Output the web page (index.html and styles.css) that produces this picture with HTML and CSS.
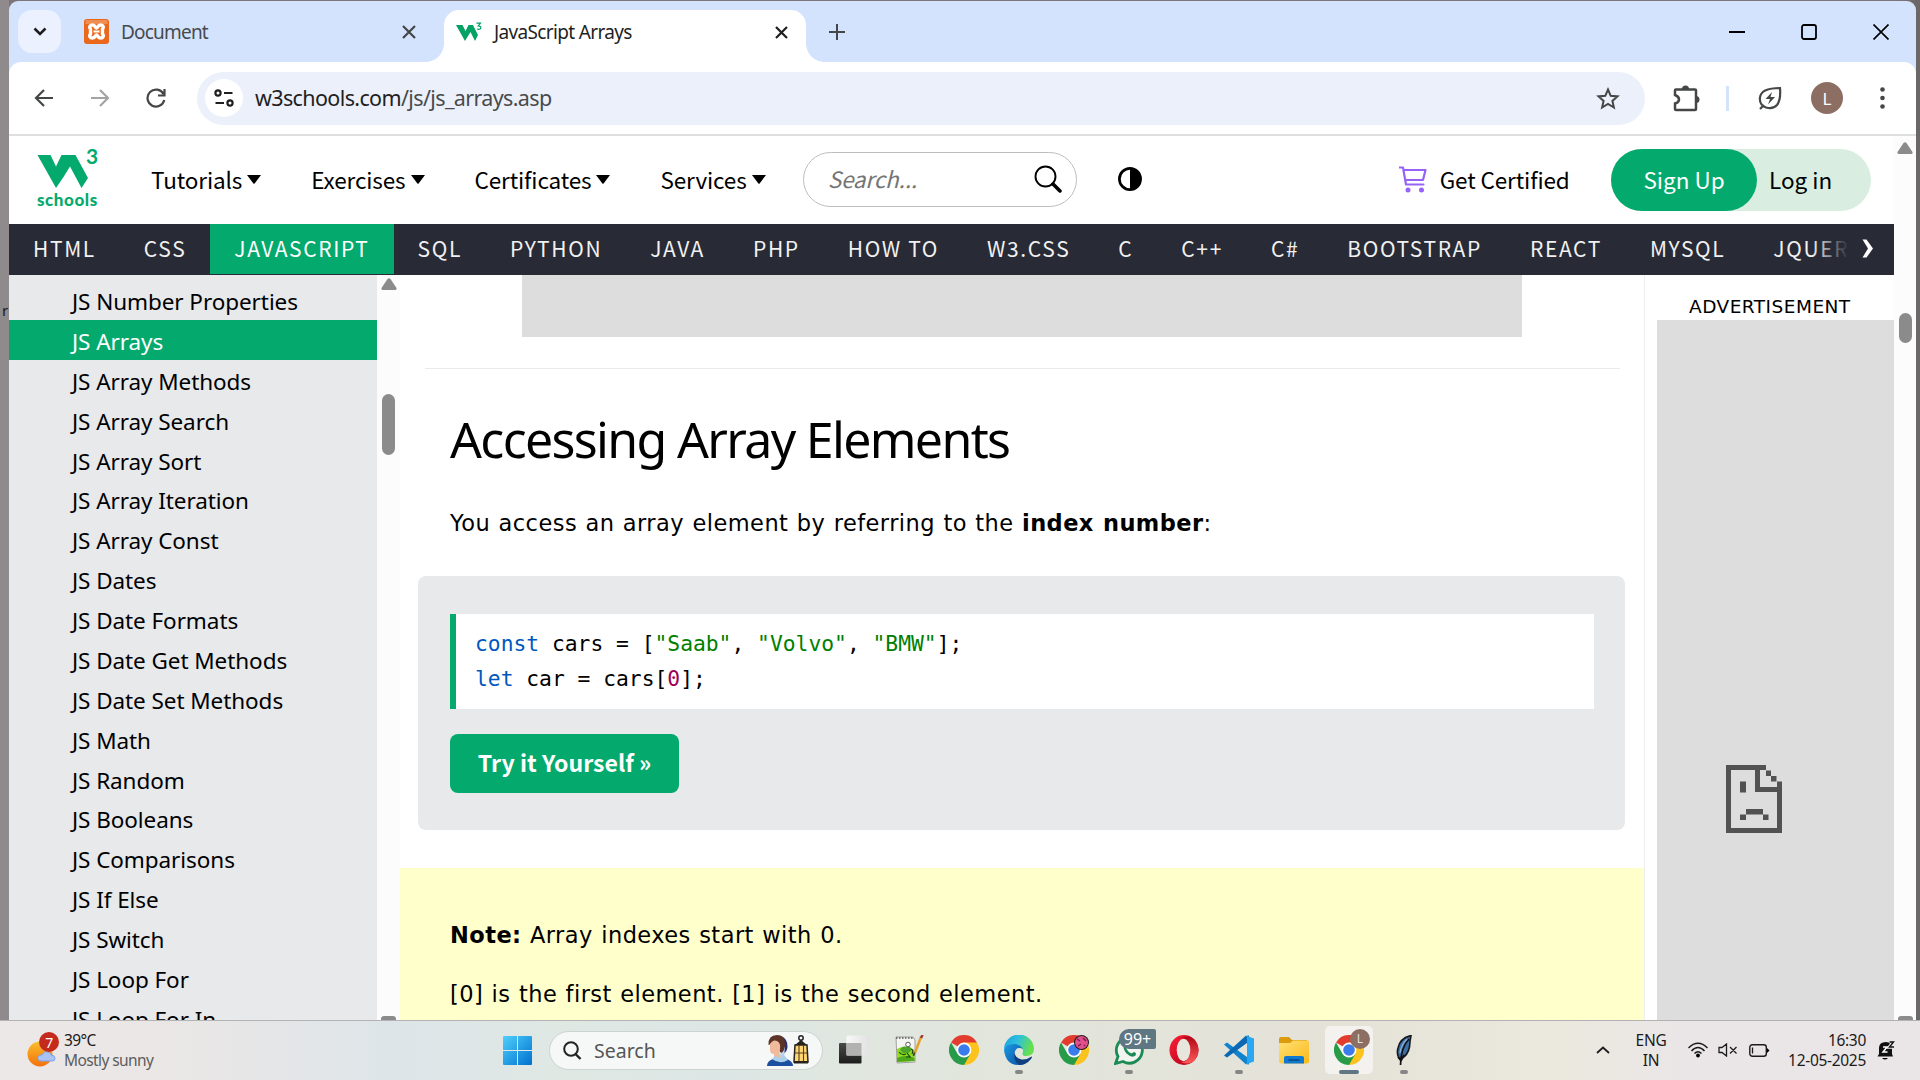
FILE: index.html
```html
<!DOCTYPE html>
<html lang="en">
<head>
<meta charset="utf-8">
<title>JavaScript Arrays</title>
<link rel="stylesheet" href="styles.css">
</head>
<body>
<svg class="defs" width="0" height="0">
  <defs>
    <linearGradient id="gWin" x1="0" y1="0" x2="1" y2="1"><stop offset="0" stop-color="#4fd0fb"/><stop offset="1" stop-color="#0070d0"/></linearGradient>
    <linearGradient id="gSun" x1="0" y1="0" x2="0" y2="1"><stop offset="0" stop-color="#f9bf2c"/><stop offset="1" stop-color="#f4700d"/></linearGradient>
    <linearGradient id="gDark" x1="0" y1="0" x2="0" y2="1"><stop offset="0" stop-color="#4a4a48"/><stop offset="1" stop-color="#1c1c1c"/></linearGradient>
    <linearGradient id="gLight" x1="0" y1="0" x2="1" y2="0"><stop offset="0" stop-color="#f8f8f8"/><stop offset="1" stop-color="#e2e2e2"/></linearGradient>
    <linearGradient id="gEdge" x1="0" y1="0" x2="1" y2="0.3"><stop offset="0" stop-color="#1c9de0"/><stop offset="0.5" stop-color="#2fc0dc"/><stop offset="1" stop-color="#66e04c"/></linearGradient>
    <linearGradient id="gEdge2" x1="0" y1="0" x2="1" y2="1"><stop offset="0" stop-color="#1a9be4"/><stop offset="1" stop-color="#0c50a0"/></linearGradient>
    <linearGradient id="gOpera" x1="0" y1="0" x2="1" y2="1"><stop offset="0" stop-color="#ff2038"/><stop offset="1" stop-color="#a80014"/></linearGradient>
    <linearGradient id="gOpera2" x1="0" y1="0" x2="0" y2="1"><stop offset="0" stop-color="#b00516"/><stop offset="1" stop-color="#ff5a5a"/></linearGradient>
    <linearGradient id="gFolder" x1="0" y1="0" x2="1" y2="1"><stop offset="0" stop-color="#ffe177"/><stop offset="1" stop-color="#fbb917"/></linearGradient>
    <symbol id="chrome" viewBox="0 0 30 30">
      <path d="M15 15L2 7.5A15 15 0 0 1 28 7.5Z" fill="#e33b2e"/>
      <path d="M15 15V7.5H28A15 15 0 0 1 15 30Z" fill="#fcc31e"/>
      <path d="M2 7.5A15 15 0 0 0 15 30L21.500 18.700L15 22L8.500 18.700Z" fill="#289b48"/>
      <circle cx="15" cy="15" r="7.400" fill="#fff"/><circle cx="15" cy="15" r="5.800" fill="#3b7cec"/>
    </symbol>
    <symbol id="caret" viewBox="0 0 14 9"><path d="M0 0H14L7.600 8.400Q7 9 6.400 8.400Z"/></symbol>
    <symbol id="w3" viewBox="0 0 50 33"><path d="M0 0H13L18.500 11.500L24 0H38L50.500 23L44 33L32.500 11.500L26 22L18.500 33Z"/></symbol>
  </defs>
</svg>

<div class="desktop">
  <span class="behind">r</span>
  <div class="window">
    <div class="tabstrip">
      <button class="tab-search"><svg width="14" height="9" viewBox="0 0 14 9"><path d="M1.500 1.500L7 7L12.500 1.500" fill="none" stroke="#1f1f1f" stroke-width="2.600"/></svg></button>
      <div class="tab">
        <svg width="25" height="25" viewBox="0 0 25 25"><rect width="25" height="25" rx="3" fill="#e9681b"/><rect x="1.500" y="1" width="22" height="4" fill="#f08e51"/><path d="M8.500 6C5.500 6 5 8.500 6.500 10V15C5 16.500 5.500 19 8.500 19C11.500 19 11 16 12.500 16S13.500 19 16.500 19C19.500 19 20 16.500 18.500 15V10C20 8.500 19.500 6 16.500 6C13.500 6 14 9 12.500 9S11.500 6 8.500 6Z" fill="none" stroke="#fff" stroke-width="3.400"/><path d="M9.500 12.500H15.500" stroke="#fff" stroke-width="2"/></svg>
        <span class="tab-title">Document</span>
        <svg class="tab-close" width="14" height="14" viewBox="0 0 14 14"><path d="M1 1L13 13M13 1L1 13" stroke="#444746" stroke-width="2.200"/></svg>
      </div>
      <div class="tab active">
        <svg width="26" height="20" viewBox="0 0 26 20"><path d="M0 3H6.500L9.500 9L12.500 3H17L22 13L19 19L14.500 10L9 19Z" fill="#04a265"/><path d="M20.500 1.200H24.500L22.300 4Q25 4 24.800 6Q24.200 8 21 7" fill="none" stroke="#04a265" stroke-width="1.200"/></svg>
        <span class="tab-title">JavaScript Arrays</span>
        <svg class="tab-close" width="13" height="13" viewBox="0 0 13 13"><path d="M1 1L12 12M12 1L1 12" stroke="#1f1f1f" stroke-width="2.200"/></svg>
      </div>
      <svg class="new-tab" width="16" height="16" viewBox="0 0 16 16"><path d="M8 0V16M0 8H16" stroke="#444746" stroke-width="2"/></svg>
      <div class="controls">
        <svg width="16" height="16" viewBox="0 0 16 16"><path d="M0 8H16" stroke="#000" stroke-width="2"/></svg>
        <svg width="16" height="16" viewBox="0 0 16 16"><rect x="1" y="1" width="14" height="14" rx="2" fill="none" stroke="#000" stroke-width="1.800"/></svg>
        <svg width="16" height="16" viewBox="0 0 16 16"><path d="M0.500 0.500L15.500 15.500M15.500 0.500L0.500 15.500" stroke="#000" stroke-width="1.700"/></svg>
      </div>
    </div>

    <div class="toolbar">
      <div class="nav-buttons">
        <svg width="20" height="20" viewBox="0 0 20 20"><path d="M19 10H2M10 2L2 10L10 18" fill="none" stroke="#444746" stroke-width="2.200"/></svg>
        <svg width="20" height="20" viewBox="0 0 20 20"><path d="M1 10H18M10 2L18 10L10 18" fill="none" stroke="#a3a5a5" stroke-width="2.200"/></svg>
        <svg width="20" height="20" viewBox="0 0 20 20"><path d="M17.500 6A8.500 8.500 0 1 0 18.300 12M18.500 1V7.500H12" fill="none" stroke="#444746" stroke-width="2.200"/></svg>
      </div>
      <div class="omnibox">
        <span class="site-info"><svg width="20" height="18" viewBox="0 0 20 18"><g fill="none" stroke="#1f1f1f" stroke-width="2.200"><circle cx="4" cy="4" r="2.600"/><path d="M10 4H18.500M1.500 14H10"/><circle cx="16" cy="14" r="2.600"/></g></svg></span>
        <span class="url"><b>w3schools.com</b>/js/js_arrays.asp</span>
        <svg class="star" width="24" height="23" viewBox="0 0 24 23"><path d="M12 2.500L14.700 8.800L21.500 9.400L16.400 13.900L17.900 20.500L12 17L6.100 20.500L7.600 13.900L2.500 9.400L9.300 8.800Z" fill="none" stroke="#444746" stroke-width="2"/></svg>
      </div>
      <div class="tools">
        <svg class="puzzle" width="27" height="28" viewBox="0 0 27 28"><path d="M3 5.500H22Q23 5.500 23 6.500V25Q23 26 22 26H3Q2 26 2 25V19.500Q6 18.500 6 15.500T2 11V6.500Q2 5.500 3 5.500Z" fill="none" stroke="#444746" stroke-width="2.500"/><path d="M9 5A3.500 3.500 0 0 1 16 5ZM23 12A3.500 3.500 0 0 1 23 19Z" fill="#444746"/></svg>
        <i class="divider"></i>
        <svg class="leaf" width="24" height="24" viewBox="0 0 24 24"><path d="M22 2Q23 14 19 19Q15 23.500 8 21.500Q1 18.500 2 11.500Q3 2 22 2ZM6 19L2 23" fill="none" stroke="#444746" stroke-width="2.200"/><path d="M14 6L7.500 13H12L10 18.500L17 11H12.500Z" fill="#444746"/></svg>
        <span class="avatar">L</span>
        <svg class="dots" width="5" height="22" viewBox="0 0 5 22"><g fill="#444746"><circle cx="2.500" cy="2.500" r="2.300"/><circle cx="2.500" cy="11" r="2.300"/><circle cx="2.500" cy="19.500" r="2.300"/></g></svg>
      </div>
    </div>

    <div class="viewport">
      <div class="site">
        <header class="site-header">
          <div class="logo"><div class="logo-top"><svg width="51" height="33" fill="#04aa6d"><use href="#w3"/></svg><span class="logo-3">3</span></div><span class="logo-name">schools</span></div>
          <nav class="menu">
            <a>Tutorials<svg width="14" height="9"><use href="#caret"/></svg></a>
            <a>Exercises<svg width="14" height="9"><use href="#caret"/></svg></a>
            <a>Certificates<svg width="14" height="9"><use href="#caret"/></svg></a>
            <a>Services<svg width="14" height="9"><use href="#caret"/></svg></a>
          </nav>
          <div class="search"><i>Search...</i><svg width="28" height="28" viewBox="0 0 28 28"><circle cx="11.500" cy="11.500" r="10" fill="none" stroke="#000" stroke-width="1.900"/><path d="M19 19L26 26" stroke="#000" stroke-width="3.500" stroke-linecap="round"/></svg></div>
          <svg class="contrast" width="24" height="24" viewBox="0 0 24 24"><circle cx="12" cy="12" r="10.600" fill="#fff" stroke="#000" stroke-width="2.700"/><path d="M12 1A11 11 0 0 1 12 23Z"/></svg>
          <div class="certified"><svg width="28" height="27" viewBox="0 0 28 27"><path d="M0.500 1.500H4L7 18.500H24.500M4.500 4H26.500L24 14H6.500" fill="none" stroke="#9763f6" stroke-width="2.200" stroke-linejoin="round" stroke-linecap="round"/><circle cx="9" cy="24" r="2.500" fill="#9763f6"/><circle cx="22.500" cy="24" r="2.500" fill="#9763f6"/></svg>Get Certified</div>
          <div class="account"><span class="signup">Sign Up</span><span class="login">Log in</span></div>
        </header>
        <nav class="topics">
          <a>HTML</a><a>CSS</a><a class="current">JAVASCRIPT</a><a>SQL</a><a>PYTHON</a><a>JAVA</a><a>PHP</a><a>HOW TO</a><a>W3.CSS</a><a>C</a><a>C++</a><a>C#</a><a>BOOTSTRAP</a><a>REACT</a><a>MYSQL</a><a>JQUERY</a>
          <span class="more"><svg width="12" height="19" viewBox="0 0 12 19"><path d="M0.500 0.500H4.500L11 9.500L4.500 18.500H0.500L6 9.500Z" fill="#fff"/></svg></span>
        </nav>
        <div class="columns">
          <aside class="sidebar">
            <a>JS Number Properties</a><a class="current">JS Arrays</a><a>JS Array Methods</a><a>JS Array Search</a><a>JS Array Sort</a><a>JS Array Iteration</a><a>JS Array Const</a><a>JS Dates</a><a>JS Date Formats</a><a>JS Date Get Methods</a><a>JS Date Set Methods</a><a>JS Math</a><a>JS Random</a><a>JS Booleans</a><a>JS Comparisons</a><a>JS If Else</a><a>JS Switch</a><a>JS Loop For</a><a>JS Loop For In</a>
          </aside>
          <div class="scroll side-scroll"><svg width="16" height="12" viewBox="0 0 16 12"><path d="M6.500 1Q8 -0.500 9.500 1L15.500 10Q16 12 14 12H2Q0 12 0.500 10Z" fill="#8b8b8b"/></svg><i class="thumb"></i><i class="down"></i></div>
          <main>
            <div class="ad-banner"></div>
            <hr>
            <h2>Accessing Array Elements</h2>
            <p class="lead">You access an array element by referring to the <b>index number</b>:</p>
            <section class="example">
              <pre><span class="kw">const</span> cars = [<span class="str">"Saab"</span>, <span class="str">"Volvo"</span>, <span class="str">"BMW"</span>];
<span class="kw">let</span> car = cars[<span class="num">0</span>];</pre>
              <a class="try">Try it Yourself »</a>
            </section>
            <section class="note">
              <p><b>Note:</b> Array indexes start with 0.</p>
              <p>[0] is the first element. [1] is the second element.</p>
            </section>
          </main>
          <aside class="ads">
            <span class="ads-label">ADVERTISEMENT</span>
            <div class="ad-tower"><svg width="56" height="68" viewBox="0 0 56 68" fill="#525252"><path d="M0 0H40V5H5V63H51V27H29V5H34V22H51V16.500H56V68H0Z"/><path d="M40 5.500H45V11H40ZM45 11H50.500V16.500H45ZM14 16.500H20V27.500H14ZM20 44H37V49.500H20ZM14 49.500H20V55H14ZM37 49.500H42.500V55H37Z"/></svg></div>
          </aside>
        </div>
      </div>
      <div class="scroll page-scroll"><svg width="16" height="12" viewBox="0 0 16 12"><path d="M6.500 1Q8 -0.500 9.500 1L15.500 10Q16 12 14 12H2Q0 12 0.500 10Z" fill="#8b8b8b"/></svg><i class="thumb"></i><i class="down"></i></div>
    </div>
  </div>
</div>

<footer class="taskbar">
  <div class="weather">
    <svg width="33" height="36" viewBox="0 0 33 36"><circle cx="13" cy="22" r="12.500" fill="url(#gSun)"/><path d="M14 29Q10 28.500 11 25Q12 22.500 15 23Q17 18.500 21 20Q24 21 24 23Q28 23 28 26.500Q28 29 25 29Z" fill="#a9c3f5" stroke="#7f9fe8"/><circle cx="22" cy="10" r="10" fill="#c42b1c"/><text x="22" y="15.500" text-anchor="middle" class="badge-text">7</text></svg>
    <div><span>39°C</span><span class="dim">Mostly sunny</span></div>
  </div>
  <svg class="start" width="29" height="29" viewBox="0 0 29 29"><path d="M1 0H14V14H0V1Q0 0 1 0ZM15 0H28Q29 0 29 1V14H15ZM0 15H14V29H1Q0 29 0 28ZM15 15H29V28Q29 29 28 29H15Z" fill="url(#gWin)"/></svg>
  <div class="task-search">
    <svg width="19" height="19" viewBox="0 0 19 19"><circle cx="8" cy="8" r="6.800" fill="none" stroke="#222" stroke-width="2"/><path d="M12.500 13L17.500 18" stroke="#222" stroke-width="2.400"/></svg>
    <span>Search</span>
    <svg class="highlight" width="42" height="32" viewBox="0 0 42 32">
      <path d="M14 2Q21 5 20.500 13Q20 18 16 20L12 5Z" fill="#2b2f6e"/><path d="M14 19L18 12L17 25H11Z" fill="#b9d4ec"/>
      <path d="M1.500 11Q1 1 10 1Q18 1 18 10Q18 17 14 19L6 9Z" fill="#5b3328"/>
      <path d="M3 10Q6 5 10 7Q14 9 13 15Q12 20 14 23L7 26V20Q3 20 3 16Z" fill="#efbb9c"/>
      <path d="M0 32Q0 27 6 25L12 26L18 24Q26 27 26 32Z" fill="#1c4fa0"/><path d="M5 25L8 22L14 24L17 21L21 26Q13 31 5 25Z" fill="#a9cfea"/>
      <circle cx="34" cy="4" r="2.200" fill="none" stroke="#222" stroke-width="1.500"/>
      <path d="M34 6L40 11H28Z" fill="#26221e"/><path d="M28 11H40L41 28H27Z" fill="#ffd670" stroke="#26221e" stroke-width="1.500"/><path d="M32 11V28M36.500 11V28M28 19H40" stroke="#5a4020" stroke-width="1.100"/><rect x="27" y="27" width="14" height="2.500" fill="#26221e"/>
    </svg>
  </div>
  <div class="apps">
    <span class="app"><svg width="30" height="30" viewBox="0 0 30 30"><rect y="8" width="22.500" height="20.500" rx="1" fill="url(#gDark)"/><rect x="7.500" y="0.500" width="22.500" height="20" rx="1" fill="url(#gLight)"/><rect x="7.500" y="8" width="15" height="12.500" fill="#b2b2b0"/></svg></span>
    <span class="app"><svg width="30" height="30" viewBox="0 0 30 30"><path d="M2 2H19L21 5V27L3 28Z" fill="#f4f4f0" stroke="#8b8b8b" stroke-width="0.800"/><path d="M3 14Q12 9 20.500 15V26L3 27Z" fill="#8fdc1c"/><path d="M3 23Q12 19 20.500 23V26L3 27Z" fill="#4ea818"/><path d="M6 15Q8 10 13 12Q18 11 17 16Q14 19 9 18Z" fill="#4da52c"/><circle cx="14" cy="9.500" r="2.300" fill="#fff" stroke="#333" stroke-width="0.800"/><path d="M5 17Q8 21 12 19M13 18L16 22H12M17 14Q20 15 18 19" fill="none" stroke="#17481a" stroke-width="1.200"/><path d="M2 3H19" stroke="#555" stroke-width="1.500" stroke-dasharray="1.500 1.500"/><path d="M27 2L20.500 19" stroke="#e4a22b" stroke-width="2.500"/><path d="M28.500 0L27 3" stroke="#9b3a32" stroke-width="2.500"/><path d="M20.500 17.500L19.500 21" stroke="#333" stroke-width="1.500"/></svg></span>
    <span class="app"><svg width="30" height="30"><use href="#chrome"/></svg></span>
    <span class="app open"><svg width="30" height="30" viewBox="0 0 30 30"><path d="M0 15A15 15 0 0 1 30 14Q30 21 22 21Q18 21 18.500 18Q20 16 18 13Q14 9 7 10Q1 11.500 0 15Z" fill="url(#gEdge)"/><path d="M0 15Q2 8.500 11 9Q17 10 19 14Q12 11 10.500 18Q11 28 18 29.700Q2 32 0 15Z" fill="url(#gEdge2)"/><path d="M10.500 17Q11 23 17.500 24.500Q23 25 27.500 21.500Q28.500 22 27 24Q22 30 16 30Q9 27 10.500 17Z" fill="#103f80"/></svg></span>
    <span class="app"><svg width="30" height="30" viewBox="0 0 30 30"><use href="#chrome"/><circle cx="22.500" cy="7.500" r="7.500" fill="#20191c"/><circle cx="22.500" cy="7.500" r="6.500" fill="#e0508c"/><path d="M18 4L21 6M24 3L27 6M19 11L22 9M25 10L26 11" stroke="#7a1e44" stroke-width="1.500" fill="none"/></svg></span>
    <span class="app open"><svg width="30" height="30" viewBox="0 0 30 30"><path d="M1.500 28.500L4 21.500A13 13 0 1 1 9 26.500Z" fill="#f2f4ef" stroke="#1b8a55" stroke-width="2.800"/><path d="M10 9Q12 7 13.500 11L12.500 14Q14 17 17.500 18.500L20 17Q23 18 21.500 20.500Q18 23.500 12.500 18.500Q8 13 10 9Z" fill="#1b8a55"/></svg><em class="count">99+</em></span>
    <span class="app"><svg width="30" height="30" viewBox="0 0 30 30"><ellipse cx="15" cy="15" rx="14.500" ry="15" fill="url(#gOpera)"/><path d="M12 3Q20 -1 26 5Q33 15 26 25Q20 31 12 27Q21 27 21 15Q21 4 12 3Z" fill="url(#gOpera2)"/><ellipse cx="14.500" cy="15" rx="6.800" ry="11.200" fill="#e6e6dc"/></svg></span>
    <span class="app open"><svg width="30" height="30" viewBox="0 0 30 30"><path d="M0 9.500L3 7.500L25 23.500V29.500L21.500 29Z" fill="#1182cc"/><path d="M0 20.500L3 22.500L25 6.500V0.500L21.500 1Z" fill="#0969b4"/><path d="M21.500 0.500L30 3.500V26.500L21.500 29.500Q23 29 23 26V4Q23 1 21.500 0.500Z" fill="#2aa7f2"/></svg></span>
    <span class="app"><svg width="30" height="30" viewBox="0 0 30 30"><path d="M0 4Q0 2 2 2H10L13 5H28V10H0Z" fill="#dc9a0e"/><path d="M0 8H11L14 5.500H28.500Q30 5.500 30 7V26.500Q30 28.500 28 28.500H2Q0 28.500 0 26.500Z" fill="url(#gFolder)"/><path d="M5 28.500V23Q5 21 7 21H23Q25 21 25 23V28.500Z" fill="#0f78d0"/><path d="M9.500 25H20.500" stroke="#083f78" stroke-width="1.300"/></svg></span>
    <span class="app open focused"><svg width="30" height="30"><use href="#chrome"/></svg><em class="profile">L</em></span>
    <span class="app open"><svg width="30" height="30" viewBox="0 0 30 30"><path d="M22 0.500Q11 3 9 13Q7.500 18 9.500 22L12 24Q19 20 20.500 12Q21 5 22 0.500Z" fill="#3d6ea5" stroke="#16181c" stroke-width="1.600"/><path d="M20 4Q12 12 11.500 30M9 22L12 26L15 20" stroke="#111" stroke-width="1.700" fill="none"/><path d="M18 4Q12 10 11 18" stroke="#86b0da" stroke-width="1.300" fill="none"/></svg></span>
  </div>
  <div class="tray">
    <svg class="chev" width="14" height="8" viewBox="0 0 14 8"><path d="M1 7L7 1.500L13 7" fill="none" stroke="#1b1b1b" stroke-width="1.800"/></svg>
    <div class="lang"><span>ENG</span><span>IN</span></div>
    <svg width="20" height="16" viewBox="0 0 20 16"><g fill="none" stroke="#1b1b1b" stroke-width="1.500"><path d="M0.500 6Q10 -3.500 19.500 6"/><path d="M3.500 9Q10 2 16.500 9"/><path d="M6.500 11.500Q10 8 13.500 11.500"/></g><circle cx="10" cy="13.500" r="1.900"/></svg>
    <svg class="mute" width="20" height="14" viewBox="0 0 20 14"><path d="M1 4.500V9.500H4L8.500 13V1L4 4.500Z M12 4L18.500 10.500M18.500 4L12 10.500" fill="none" stroke="#1b1b1b" stroke-width="1.300"/></svg>
    <svg class="battery" width="21" height="13" viewBox="0 0 21 13"><rect x="0.800" y="0.800" width="16.500" height="11.400" rx="2.500" fill="none" stroke="#1b1b1b" stroke-width="1.400"/><path d="M3.500 3.500V9.500" stroke="#1b1b1b" stroke-width="1.300"/><path d="M18 4L20.500 6.500L18 9Z"/></svg>
    <div class="clock"><span>16:30</span><span>12-05-2025</span></div>
    <svg class="bell" width="18" height="19" viewBox="0 0 18 19"><path d="M2 13V7Q2 1 9 1Q15 1 15 7V13L16 15.500H0.500Z" fill="#111"/><path d="M5 17H11Q8 20 5 17Z"/><path d="M6 6H10L6 11H10.500" fill="none" stroke="#fff" stroke-width="1.500"/><path d="M12 0.500H17L12.500 6H17" fill="none" stroke="#f0ecec" stroke-width="3.500"/><path d="M12.500 1H16.500L12.500 6H17" fill="none" stroke="#111" stroke-width="1.400"/></svg>
  </div>
</footer>
</body>
</html>
```
FILE: styles.css
```css
* { box-sizing: border-box; }
body {
  margin: 0;
  width: 1920px;
  height: 1080px;
  overflow: hidden;
  display: flex;
  flex-direction: column;
  background: #fff;
  color: #000;
  font-family: "Noto Sans", sans-serif;
}
svg { display: block; flex: none; }
.defs { position: absolute; }
i { font-style: normal; }
em { font-style: normal; }

/* desktop and browser window */
.desktop {
  position: relative;
  flex: none;
  height: 1020px;
  padding: 1px 4px 0 9px;
  background: linear-gradient(90deg, #8f8b8c 0 9px, #7d7578 9px 1900px, #6b6668 1916px);
}
.behind {
  position: absolute;
  left: 2px;
  top: 300px;
  font-size: 15px;
  color: #1a1a1a;
}
.window {
  position: relative;
  height: 1019px;
  overflow: hidden;
  display: flex;
  flex-direction: column;
  border-radius: 9px 9px 0 0;
  background: #d3e3fd;
}
.tabstrip {
  flex: none;
  height: 61px;
  display: flex;
  align-items: center;
  padding: 9px 27px 9px 9px;
}
.tab-search {
  width: 43px;
  height: 43px;
  border: 0;
  padding: 0;
  border-radius: 14px;
  background: #ebf1fe;
  display: grid;
  place-items: center;
}
.tab {
  width: 383px;
  height: 52px;
  display: flex;
  align-items: center;
  padding: 0 28px 9px 23px;
  align-self: flex-start;
  font-size: 19px;
  letter-spacing: -0.800px;
  color: #474a4d;
}
.tab-title { margin-left: 12px; line-height: 24px; }
.tab-close { margin-left: auto; }
.tab.active {
  position: relative;
  width: 362px;
  padding: 0 18px 8px 12px;
  background: #fff;
  border-radius: 15px 15px 0 0;
  color: #1f1f1f;
}
.tab.active .tab-title { margin-left: 12px; letter-spacing: -0.650px; }
.tab.active::before, .tab.active::after {
  content: "";
  position: absolute;
  bottom: 0;
  width: 18px;
  height: 18px;
}
.tab.active::before { right: 100%; background: radial-gradient(circle at 0 0, transparent 17.500px, #fff 18px); }
.tab.active::after { left: 100%; background: radial-gradient(circle at 100% 0, transparent 17.500px, #fff 18px); }
.new-tab { margin-left: 23px; }
.controls { margin-left: auto; display: flex; gap: 56px; }

.toolbar {
  flex: none;
  height: 74px;
  display: flex;
  align-items: center;
  background: #fff;
  border-radius: 12px 12px 0 0;
  border-bottom: 2px solid #dddfe0;
  padding: 0 31px 0 25px;
}
.nav-buttons { display: flex; gap: 36px; width: 163px; }
.omnibox {
  width: 1448px;
  height: 53px;
  border-radius: 27px;
  background: #ecf0fa;
  display: flex;
  align-items: center;
  padding: 0 25px 0 8px;
}
.site-info {
  width: 38px;
  height: 38px;
  border-radius: 50%;
  background: #fff;
  display: grid;
  place-items: center;
}
.url { margin: 0 0 2px 12px; font-size: 21.500px; letter-spacing: -0.630px; color: #474a4d; }
.url b { font-weight: 400; color: #1f1f1f; }
.star { margin-left: auto; }
.tools { flex: 1; display: flex; align-items: center; padding-left: 28px; }
.divider { width: 3px; height: 25px; background: #d3e3fd; margin: 0 29px 0 26px; }
.avatar {
  width: 32px;
  height: 32px;
  margin-left: 29px;
  border-radius: 50%;
  background: #8d6e63;
  color: #fff;
  font-size: 17px;
  display: grid;
  place-items: center;
}
.dots { margin-left: auto; }

/* page */
.viewport { flex: 1; display: flex; min-height: 0; background: #fff; }
.site { width: 1885px; display: flex; flex-direction: column; }
.scroll {
  display: flex;
  flex-direction: column;
  align-items: center;
  background: #fcfcfc;
}
.scroll .thumb { width: 13px; border-radius: 7px; background: #8b8b8b; }
.scroll .down { margin-top: auto; width: 15px; height: 4px; border-radius: 3px 3px 0 0; background: #8b8b8b; }
.page-scroll { width: 22px; padding-top: 6px; }
.page-scroll .thumb { height: 30px; margin-top: 159px; }
.side-scroll { width: 23px; padding-top: 3px; }
.side-scroll .thumb { height: 61px; margin-top: 104px; }

.site-header {
  flex: none;
  height: 88px;
  padding-bottom: 2px;
  display: flex;
  align-items: center;
  font-family: "Noto Sans CJK SC", sans-serif;
  font-size: 22.500px;
}
.logo { margin-left: 28px; width: 63px; height: 62px; color: #04aa6d; }
.logo-top { display: flex; height: 44px; padding-top: 7px; }
.logo-3 { font: 700 21px/20px Lato, sans-serif; margin: -9px 0 0 -2px; }
.logo-name { display: block; font: 900 17px/16px Lato, sans-serif; letter-spacing: 0.550px; }
.menu { display: flex; margin-left: 51px; gap: 50px; letter-spacing: -0.120px; }
.menu a { display: flex; align-items: center; gap: 5px; }
.search {
  margin-left: 37px;
  width: 274px;
  height: 55px;
  border: 1px solid #bdbdbd;
  border-radius: 28px;
  display: flex;
  align-items: center;
  justify-content: space-between;
  padding: 0 14px 0 24px;
  color: #757575;
}
.search i { font-style: italic; letter-spacing: -0.150px; line-height: 32px; padding-bottom: 2px; }
.contrast { margin-left: 41px; }
.certified { margin-left: 257px; display: flex; align-items: center; gap: 13px; letter-spacing: -0.100px; }
.account {
  margin-left: auto;
  margin-right: 23px;
  margin-top: 2px;
  width: 260px;
  height: 62px;
  border-radius: 31px;
  background: #d9eee1;
  display: flex;
}
.account span { line-height: 60px; }
.signup {
  width: 146px;
  border-radius: 31px;
  background: #04aa6d;
  color: #fff;
  text-align: center;
}
.login { margin-left: 12px; }

.topics {
  position: relative;
  flex: none;
  height: 51px;
  overflow: hidden;
  display: flex;
  background: #282a35;
  color: #f1f1f1;
  font: 21px/49px "Noto Sans CJK SC", sans-serif;
  letter-spacing: 1.630px;
}
.topics a { padding: 0 24px; flex: none; height: 50px; }
.topics a.current { background: #04aa6d; color: #fff; }
.more {
  position: absolute;
  right: 0;
  top: 0;
  width: 82px;
  height: 51px;
  background: linear-gradient(90deg, transparent, #282a35 45%);
  display: flex;
  align-items: center;
  justify-content: flex-end;
  padding: 0 20px 2px 0;
}

.columns { flex: 1; min-height: 0; display: flex; }
.sidebar {
  width: 368px;
  background: #e7e9eb;
  overflow: hidden;
  padding-top: 5px;
  font-size: 22.500px;
  letter-spacing: -0.070px;
}
.sidebar a { display: block; height: 39.880px; line-height: 43px; padding-left: 63px; }
.sidebar a.current { background: #04aa6d; color: #fff; }
main { width: 1245px; overflow: hidden; border-right: 1px solid #eee; font-family: "DejaVu Sans", sans-serif; }
.ad-banner { width: 1000px; height: 62px; margin-left: 122px; background: #ddd; }
hr { margin: 31px 24px 0 25px; border: 0; height: 1px; background: #eaeaea; }
h2 {
  margin: 35px 0 0 50px;
  font: 400 50px/70px "Noto Sans", sans-serif;
  letter-spacing: -1.660px;
}
.lead { margin: 32px 0 0 50px; }
.lead, .note {
  font-size: 22.500px;
  line-height: 34px;
  letter-spacing: 0.450px;
  word-spacing: 0.800px;
}
.example {
  margin: 36px 19px 0 18px;
  height: 254px;
  border-radius: 8px;
  background: #e7e9eb;
  padding: 38px 31px 0 32px;
}
pre {
  margin: 0 0 25px;
  height: 95px;
  padding: 12px 0 0 19px;
  border-left: 6px solid #04aa6d;
  background: #fff;
  font: 21.300px/35px "DejaVu Sans Mono", monospace;
}
.kw { color: #0057c0; }
.str { color: #008000; }
.num { color: #905; }
.try {
  display: block;
  width: 229px;
  height: 59px;
  border-radius: 8px;
  background: #04aa6d;
  color: #fff;
  text-align: center;
  font: 700 23.100px/56px "Noto Sans CJK SC", sans-serif;
}
.note { margin-top: 38px; height: 152px; background: #ffffcc; padding: 50px 0 0 50px; }
.note p { margin: 0 0 25px; }
.ads { margin-left: 12px; flex: 1; display: flex; flex-direction: column; }
.ads-label { height: 45px; padding-left: 32px; font: 18.500px/63px "DejaVu Sans", sans-serif; letter-spacing: 0.480px; }
.ad-tower { flex: 1; background: #ddd; padding: 445px 0 0 69px; }

/* taskbar */
.taskbar {
  flex: none;
  height: 60px;
  border-top: 1px solid #b3b3b3;
  padding-bottom: 1px;
  display: flex;
  align-items: center;
  background: linear-gradient(90deg, #ece8e7 0, #e9e6e6 200px, #dde5e9 400px, #dfe8e3 560px, #dce6e5 720px, #e0e7df 850px, #e3e4da 1150px, #e5e2d8 1350px, #ebe8dd 1550px, #eae6e7 1680px, #eae6e8 1920px);
  color: #1b1b1b;
}
.weather { display: flex; width: 477px; padding-left: 27px; gap: 4px; align-items: center; font-size: 15.500px; letter-spacing: -0.600px; }
.weather div { line-height: 20px; padding-bottom: 1px; }
.weather span { display: block; }
.dim { color: #5c5c5c; }
.badge-text { fill: #fff; font-size: 14px; }
.start { margin-left: 26px; }
.task-search {
  margin-left: 17px;
  width: 274px;
  height: 39px;
  border-radius: 20px;
  border: 1px solid #cdd3d1;
  background: #f5f8f7;
  display: flex;
  align-items: center;
  padding: 0 13px;
  font-size: 19.500px;
  color: #555;
}
.task-search span { margin-left: 12px; }
.highlight { margin-left: auto; }
.apps { display: flex; margin-left: 3px; }
.app { position: relative; width: 55px; height: 48px; display: grid; place-items: center; }
.app svg { position: relative; }
.app.open::after {
  content: "";
  position: absolute;
  bottom: 0;
  width: 8px;
  height: 4px;
  border-radius: 2px;
  background: #868686;
}
.app.focused::before {
  content: "";
  position: absolute;
  inset: 0 3px 0 4px;
  border-radius: 5px;
  background: #f3f2ef;
}
.app.focused::after { width: 20px; background: #5f7684; }
.count {
  position: absolute;
  left: 18px;
  top: 3px;
  width: 37px;
  height: 20px;
  border-radius: 10px 2px 2px 10px;
  background: #5f7683;
  color: #fff;
  font-size: 16px;
  line-height: 20px;
  text-align: center;
}
.profile {
  position: absolute;
  left: 29px;
  top: 3px;
  width: 20px;
  height: 20px;
  border-radius: 50%;
  background: #8d6e63;
  color: #e8dfdc;
  font-size: 12px;
  line-height: 20px;
  text-align: center;
}
.tray { flex: 1; display: flex; align-items: center; padding-right: 25px; font-size: 15.500px; letter-spacing: -0.300px; line-height: 20px; }
.chev { margin-left: 165px; }
.tray span { display: block; }
.lang { width: 40px; margin: 0 17px 0 21px; text-align: center; }
.mute { margin-left: 10px; }
.battery { margin-left: 11px; }
.clock { margin-left: auto; margin-right: 11px; text-align: right; }
.clock, .lang { padding-bottom: 1px; }
```
